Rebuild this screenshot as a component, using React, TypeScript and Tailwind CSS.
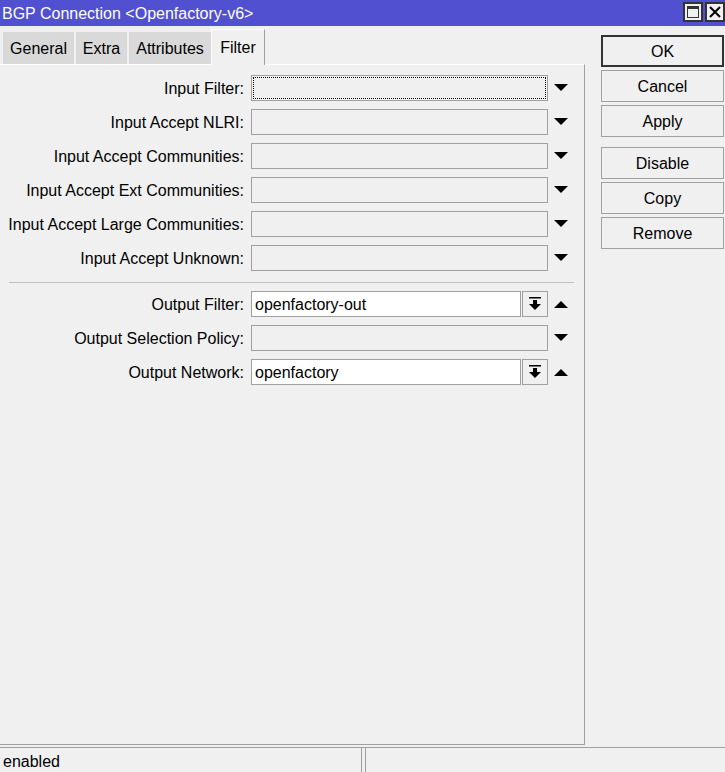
import React from 'react';

const font = { fontFamily: '"Liberation Sans", Arial, sans-serif' };

function DownArrow() {
  return (
    <svg width="14" height="8" viewBox="0 0 14 8" className="block">
      <polygon points="0,0 14,0 7,7" fill="#000" />
    </svg>
  );
}

function UpArrow() {
  return (
    <svg width="14" height="8" viewBox="0 0 14 8" className="block">
      <polygon points="0,8 14,8 7,1" fill="#000" />
    </svg>
  );
}

function DropIcon() {
  return (
    <svg width="12" height="14" viewBox="0 0 12 14" className="block">
      <rect x="0" y="0" width="12" height="1.5" fill="#000" />
      <rect x="4" y="3" width="4" height="4" fill="#000" />
      <polygon points="0,7 12,7 6,13" fill="#000" />
    </svg>
  );
}

type Row = { label: string; value?: string; focus?: boolean; select?: boolean };

const inputRows: Row[] = [
  { label: 'Input Filter:', focus: true },
  { label: 'Input Accept NLRI:' },
  { label: 'Input Accept Communities:' },
  { label: 'Input Accept Ext Communities:' },
  { label: 'Input Accept Large Communities:' },
  { label: 'Input Accept Unknown:' },
];

const outputRows: Row[] = [
  { label: 'Output Filter:', value: 'openfactory-out', select: true },
  { label: 'Output Selection Policy:' },
  { label: 'Output Network:', value: 'openfactory', select: true },
];

function FieldRow({ row }: { row: Row }) {
  return (
    <div className="flex items-center h-[26px]">
      <div className="w-[245px] text-right pr-[1px] whitespace-nowrap pt-[1px]">{row.label}</div>
      <div className="ml-[6px] flex h-full">
        {row.select ? (
          <>
            <div className="w-[270px] h-full bg-white border border-[#a0a0a0] px-[3px] leading-[25px]">
              {row.value}
            </div>
            <div className="ml-[1px] w-[26px] h-full border border-[#a0a0a0] bg-[#f0f0f0] flex items-center justify-center">
              <DropIcon />
            </div>
          </>
        ) : (
          <div className="w-[297px] h-full border border-[#a0a0a0] p-[1px]">
            {row.focus && <div className="w-full h-full border border-dotted border-black" />}
          </div>
        )}
      </div>
      <div className="ml-[6px]">{row.select ? <UpArrow /> : <DownArrow />}</div>
    </div>
  );
}

function SideButton({ label, primary }: { label: string; primary?: boolean }) {
  return (
    <button
      className={
        'w-[123px] h-[32px] bg-[#f0f0f0] text-black text-[16px] pt-[1px] ' +
        (primary ? 'border-2 border-[#333333]' : 'border border-[#a0a0a0]')
      }
    >
      {label}
    </button>
  );
}

export default function App() {
  return (
    <div className="w-[725px] h-[772px] bg-[#f0f0f0] text-black text-[16px] flex flex-col overflow-hidden" style={font}>
      {/* title bar */}
      <div className="h-[26px] bg-[#5050d0] flex items-center pl-[2px] shrink-0">
        <span className="text-white text-[16px] pt-[1px]">BGP Connection &lt;Openfactory-v6&gt;</span>
        <div className="ml-auto flex items-start h-full pt-[2px] gap-[2px]">
          <div className="w-[20px] h-[20px] bg-[#f0f0f0] border-2 border-[#333] p-[2px]">
            <div className="w-full h-full border border-[#333] border-t-[3px]" />
          </div>
          <div className="w-[20px] h-[20px] bg-[#f0f0f0] border-2 border-[#333] flex items-center justify-center">
            <svg width="12" height="12" viewBox="0 0 12 12">
              <path d="M1 1 L11 11 M11 1 L1 11" stroke="#000" strokeWidth="2" />
            </svg>
          </div>
        </div>
      </div>

      <div className="flex flex-1 min-h-0">
        {/* left area */}
        <div className="w-[585px] flex flex-col pb-[2px]">
          <div className="h-[38px] flex items-end shrink-0">
            <div className="ml-[3px] w-[71px] h-[32px] bg-[#d9d9d9] flex items-center justify-center pt-[2px]">General</div>
            <div className="ml-[2px] w-[51px] h-[32px] bg-[#d9d9d9] flex items-center justify-center pt-[2px]">Extra</div>
            <div className="ml-[2px] w-[82px] h-[32px] bg-[#d9d9d9] flex items-center justify-center pt-[2px]">Attributes</div>
            <div className="w-[54px] h-[36px] -mb-[1px] bg-[#f0f0f0] border-t border-l border-white border-r border-r-[#a0a0a0] flex items-start justify-center pt-[6px] relative z-10">
              Filter
            </div>
          </div>
          <div className="flex-1 border-t border-white border-r border-b border-r-[#a0a0a0] border-b-[#a0a0a0] pt-[10px] flex flex-col">
            <div className="flex flex-col gap-[8px]">
              {inputRows.map((r) => (
                <FieldRow key={r.label} row={r} />
              ))}
            </div>
            <div className="ml-[9px] mr-[10px] mt-[11px] mb-[8px] border-t border-[#c0c0c0]" />
            <div className="flex flex-col gap-[8px]">
              {outputRows.map((r) => (
                <FieldRow key={r.label} row={r} />
              ))}
            </div>
          </div>
        </div>

        {/* right buttons */}
        <div className="pl-[16px] pt-[9px] flex flex-col">
          <div className="flex flex-col gap-[3px]">
            <SideButton label="OK" primary />
            <SideButton label="Cancel" />
            <SideButton label="Apply" />
          </div>
          <div className="mt-[10px] flex flex-col gap-[3px]">
            <SideButton label="Disable" />
            <SideButton label="Copy" />
            <SideButton label="Remove" />
          </div>
        </div>
      </div>

      {/* status bar */}
      <div className="h-[25px] border-t border-[#a0a0a0] flex shrink-0">
        <div className="w-[362px] border-r border-[#a0a0a0] pl-[3px] leading-[24px] pt-[2px]">enabled</div>
        <div className="ml-[3px] flex-1 border-l border-[#a0a0a0]" />
      </div>
    </div>
  );
}
